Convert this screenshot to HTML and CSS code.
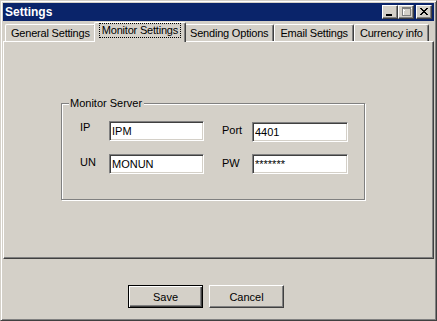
FILE: index.html
```html
<!DOCTYPE html>
<html lang="en">
   <head>
      <meta charset="UTF-8" />
      <meta name="viewport" content="width=device-width, initial-scale=1.0" />
      <title>Settings</title>
      <link rel="stylesheet" href="styles.css">
   </head>
   <body>
      <div class="window">
         <div class="titlebar">
            <span class="title">Settings</span>
            <div class="caption-buttons">
               <button class="cap-btn" type="button">
                  <svg width="14" height="12" viewBox="0 0 14 12" shape-rendering="crispEdges">
                     <rect x="3" y="8" width="6" height="2" fill="#000" />
                  </svg>
               </button>
               <button class="cap-btn" type="button" disabled>
                  <svg width="14" height="12" viewBox="0 0 14 12" shape-rendering="crispEdges">
                     <path d="M4 2h9v1h-8v7h-1z M5 4h1v1h-1z" fill="#fff" />
                     <path d="M3 1h9v2h-8v6h7v-6h1v7h-9z" fill="#808080" />
                  </svg>
               </button>
               <button class="cap-btn close" type="button">
                  <svg width="14" height="12" viewBox="0 0 14 12" shape-rendering="crispEdges">
                     <path d="M3 2h2v1h-2z M9 2h2v1h-2z M4 3h2v1h-2z M8 3h2v1h-2z M5 4h2v1h-2z M7 4h2v1h-2z M6 5h2v1h-2z M5 6h2v1h-2z M7 6h2v1h-2z M4 7h2v1h-2z M8 7h2v1h-2z M3 8h2v1h-2z M9 8h2v1h-2z" fill="#000" />
                  </svg>
               </button>
            </div>
         </div>

         <div class="tabs">
            <div class="tab">General Settings</div>
            <div class="tab active"><span class="focus">Monitor Settings</span></div>
            <div class="tab">Sending Options</div>
            <div class="tab">Email Settings</div>
            <div class="tab">Currency info</div>
         </div>

         <div class="panel">
            <div class="group">
               <span class="group-title">Monitor Server</span>
               <div class="fields">
                  <label class="field-label first">IP</label>
                  <input type="text" value="IPM" />
                  <label class="field-label second">Port</label>
                  <input type="text" class="low" value="4401" />

                  <label class="field-label">UN</label>
                  <input type="text" value="MONUN" />
                  <label class="field-label second">PW</label>
                  <input type="text" value="*******" />
               </div>
            </div>
         </div>

         <div class="footer">
            <button class="btn default" type="button">Save</button>
            <button class="btn" type="button">Cancel</button>
         </div>
      </div>
   </body>
</html>
```

FILE: styles.css
```css
* {
   box-sizing: border-box;
}

body {
   margin: 0;
   background-color: #d4d0c8;
   font-family: 'Liberation Sans', Arial, sans-serif;
   font-size: 11px;
   color: #000;
}

.window {
   width: 437px;
   height: 321px;
   padding: 2px;
   background: #d4d0c8;
   border: 1px solid;
   border-color: #d4d0c8 #404040 #404040 #d4d0c8;
   box-shadow: inset 1px 1px #fff, inset -1px -1px #808080;
}

.titlebar {
   display: flex;
   justify-content: space-between;
   align-items: center;
   height: 18px;
   padding: 0 2px 0 2px;
   background: #0a246a;
}

.title {
   color: #fff;
   font-weight: bold;
   font-size: 12px;
}

.caption-buttons {
   display: flex;
}

.cap-btn {
   width: 16px;
   height: 14px;
   padding: 0;
   display: flex;
   background: #d4d0c8;
   border: 1px solid;
   border-color: #fff #404040 #404040 #fff;
   box-shadow: inset -1px -1px #808080;
}

.cap-btn.close {
   margin-left: 2px;
}

.tabs {
   display: flex;
   align-items: flex-end;
   height: 19px;
   margin-top: 1px;
   padding-left: 2px;
   letter-spacing: -0.2px;
}

.tab {
   height: 17px;
   padding: 2px 5px 0 5px;
   background: #d4d0c8;
   border: 1px solid;
   border-color: #fff #404040 transparent #fff;
   border-bottom: none;
   box-shadow: inset -1px 0 #808080;
   border-radius: 2px 2px 0 0;
   white-space: nowrap;
}

.tab.active {
   position: relative;
   z-index: 1;
   height: 20px;
   margin: 0 -2px -1px -2px;
   padding: 1px 5px 0 5px;
}

.focus {
   display: inline-block;
   padding: 0 2px;
   line-height: 13px;
   outline: 1px dotted #000;
}

.panel {
   height: 218px;
   padding: 61px 0 0 57px;
   border: 1px solid;
   border-color: #fff #404040 #404040 #fff;
   box-shadow: inset -1px -1px #808080;
}

.group {
   position: relative;
   width: 304px;
   height: 97px;
   padding: 17px 0 0 18px;
   border: 1px solid #808080;
   box-shadow: inset 1px 1px #fff, 1px 1px #fff;
}

.group-title {
   position: absolute;
   top: -7px;
   left: 7px;
   padding: 0 2px 0 1px;
   background: #d4d0c8;
   line-height: 13px;
}

.fields {
   display: grid;
   grid-template-columns: 29px 95px 48px 96px;
   grid-auto-rows: 20px;
   row-gap: 13px;
}

.field-label {
   padding-top: 2px;
}

.field-label.first {
   padding-top: 0;
}

.field-label.second {
   padding: 3px 0 0 18px;
}

input[type="text"] {
   height: 20px;
   margin: 0;
   padding: 0 2px;
   font-family: inherit;
   font-size: 11px;
   color: #000;
   background: #fff;
   border: 1px solid;
   border-color: #808080 #fff #fff #808080;
   box-shadow: inset 1px 1px #404040, inset -1px -1px #d4d0c8;
   outline: none;
}

input.low {
   margin-top: 1px;
}

.footer {
   display: flex;
   gap: 6px;
   padding: 26px 0 0 125px;
}

.btn {
   width: 75px;
   height: 23px;
   padding: 0;
   font-family: inherit;
   font-size: 11px;
   color: #000;
   background: #d4d0c8;
   border: 1px solid;
   border-color: #fff #404040 #404040 #fff;
   box-shadow: inset -1px -1px #808080;
}

.btn.default {
   border-color: #000;
   box-shadow: inset 1px 1px #fff, inset -1px -1px #404040, inset -2px -2px #808080;
}
```
